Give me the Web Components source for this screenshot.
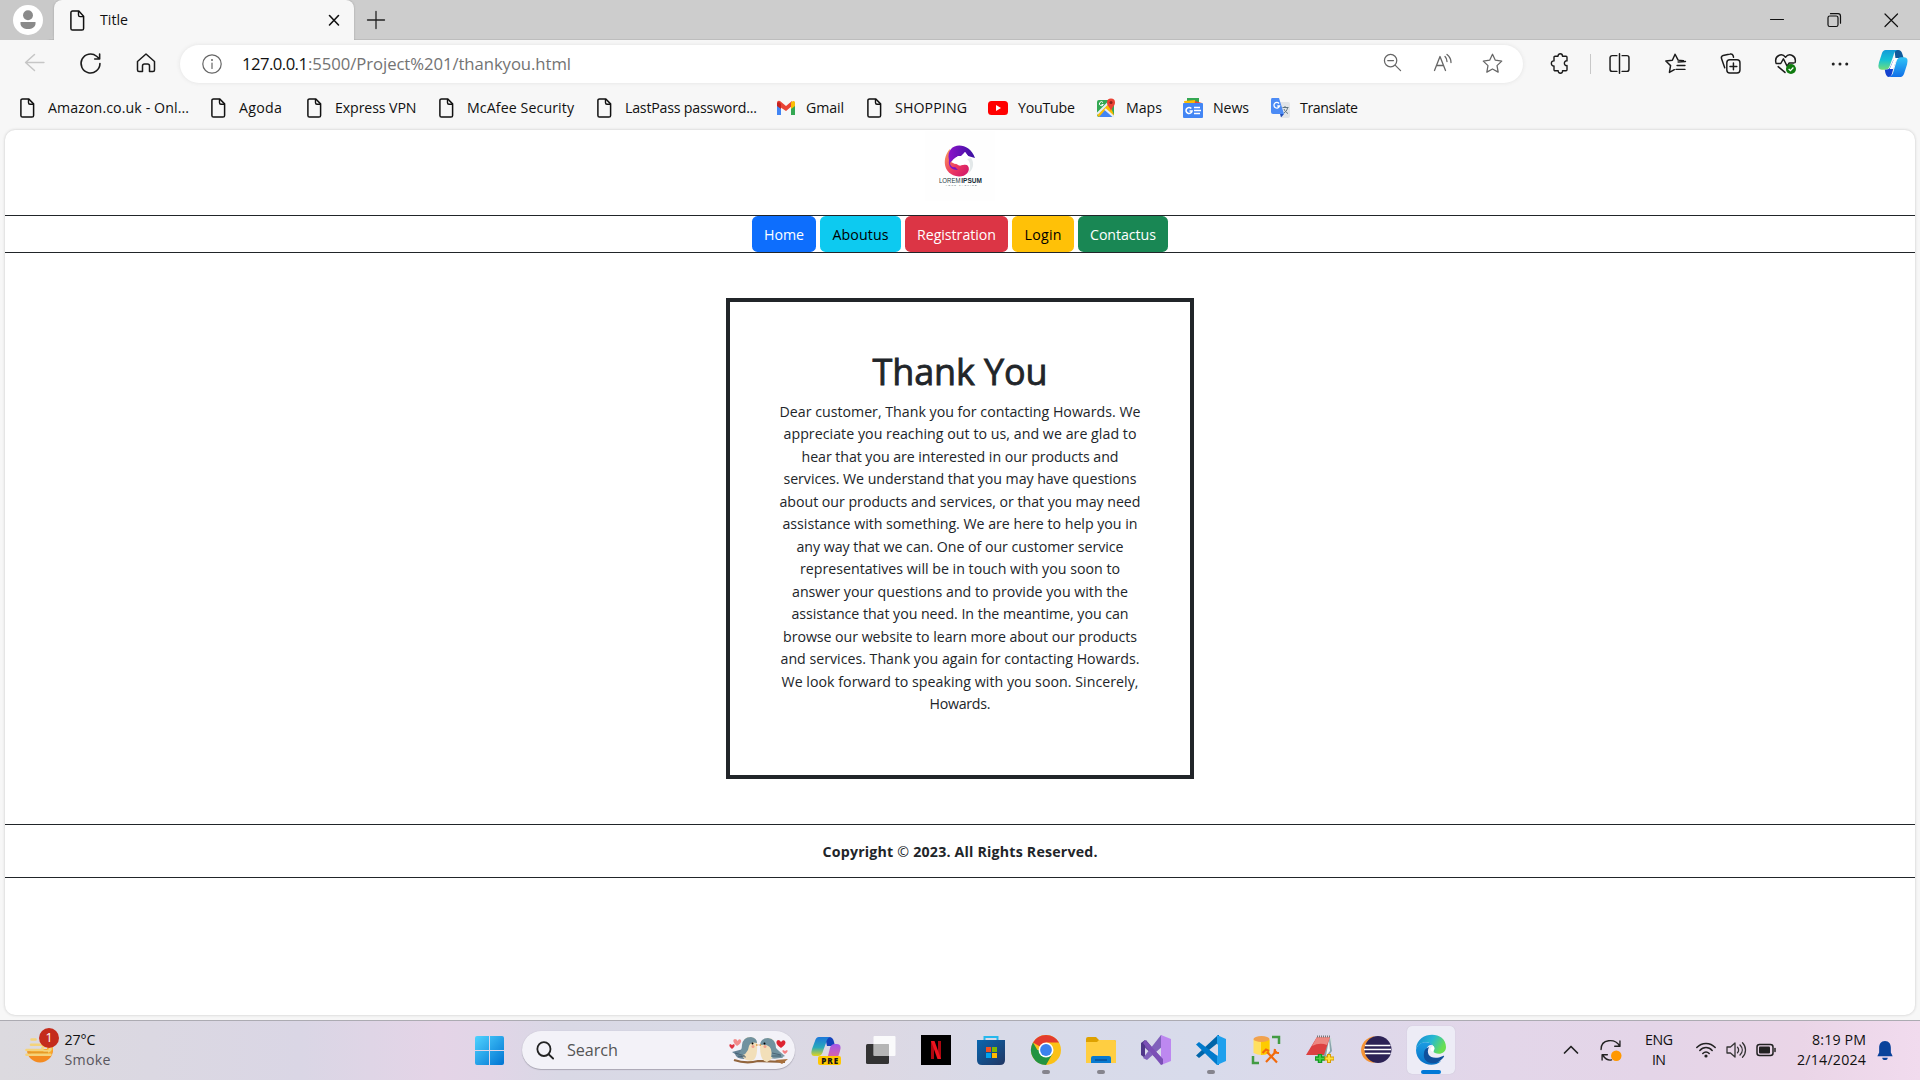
<!DOCTYPE html>
<html lang="en">
<head>
<meta charset="utf-8">
<title>Title</title>
<style>
html,body{margin:0;padding:0;height:100%;overflow:hidden}
body{font-family:"Open Sans","Noto Sans",sans-serif;color:#111;background:#f7f7f7}
</style>
</head>
<body>
<desktop-screen></desktop-screen>
<script>
const doc = '<path d="M4.5 .9h6.3l4.8 5v11.6a1.6 1.6 0 0 1-1.6 1.6H4.5a1.6 1.6 0 0 1-1.6-1.6V2.5A1.6 1.6 0 0 1 4.500 .9z" fill="none" stroke="#111" stroke-width="1.5"/><path d="M10.500 1v3.800a1.500 1.500 0 0 0 1.500 1.500h3.500" fill="none" stroke="#111" stroke-width="1.400"/>';
const L = (s, c = '#1b1b1b', w = 1.4) => `<g fill="none" stroke="${c}" stroke-width="${w}" stroke-linecap="round" stroke-linejoin="round">${s}</g>`;
const star = 'M10 1.200l2.700 5.700 6.100.8-4.500 4.300 1.100 6.200L10 15.200l-5.400 3 1.100-6.200L1.200 7.700l6.100-.8z';
const ICONS = {
doc,
user:'<circle cx="10" cy="10" r="10" fill="#fff"/><circle cx="10" cy="6.800" r="3.300" fill="#8a8a8a"/><path d="M5 11.400h10v.9c0 2.300-2.200 3.700-5 3.700s-5-1.400-5-3.700z" fill="#8a8a8a"/>',
close:L('<path d="M5.500 5.500l9 9.500M14.500 5.500l-9 9.500"/>','#111',1.6),
plus:L('<path d="M10 1.500v17M1.500 10h17"/>','#222',1.300),
min:L('<path d="M3.500 9.500h13"/>','#111',1.100),
restore:L('<rect x="4" y="6" width="10" height="10.500" rx="1.800"/><path d="M6.500 3.700h7.500a2.500 2.500 0 0 1 2.500 2.500v7"/>','#111',1.200),
winclose:L('<path d="M4 4l12.500 12.500M16.500 4L4 16.500"/>','#111',1.200),
back:L('<path d="M19 10H1.500M10 1.500L1.500 10l8.500 8.500"/>','#c6c6c6',1.400),
reload:L('<path d="M19 10a9 9 0 1 1-3.200-6.900l2.700 2.400M18.700 1v4.700H14"/>','#1b1b1b',1.500),
home:L('<path d="M1.500 8.500L10 1l8.500 7.500V17a1.500 1.500 0 0 1-1.500 1.500h-3.500V13a2 2 0 0 0-2-2h-3a2 2 0 0 0-2 2v5.500H3A1.500 1.500 0 0 1 1.500 17z"/>','#1b1b1b',1.500),
info:L('<circle cx="10" cy="10" r="9.200"/><path d="M10 9v5.500"/>','#666',1.200)+'<circle cx="10" cy="6" r="1" fill="#666"/>',
zoomout:L('<circle cx="8" cy="8" r="6.500"/><path d="M13 13l5.500 5.500M5 8h6"/>','#666',1.300),
read:L('<path d="M1.500 17.500L7 3.500l5.500 14M3.500 12.500h7M12 3.500c1.500 1.500 2 3 2 5M14 1.500c2.500 2 4 4.500 4 8"/>','#666',1.300),
star:L(`<path d="${star}"/>`,'#666',1.200),
ext:L('<path d="M5 3h3c0-3 4.500-3 4.500 0H16a1 1 0 0 1 1 1v3.500c-3.500-.5-3.500 5 0 4.500V16a1 1 0 0 1-1 1h-3.500c.5 3-4.500 3-4.300 0H5a1 1 0 0 1-1-1v-3.700C.5 12.500.5 7.300 4 7.500V4a1 1 0 0 1 1-1z"/>'),
split:L('<path d="M10 .8v18.500M7.500 2.500H3A2 2 0 0 0 1 4.500v11a2 2 0 0 0 2 2h4.500M12.500 2.500H17a2 2 0 0 1 2 2v11a2 2 0 0 1-2 2h-4.500"/>'),
favs:L('<path d="M17.500 7.300l-5-.5L9.600 1.200 7 6.900l-6.200.8L5.300 12l-1.100 6.500 4.700-2.600M12.500 8.500l7-.5M11.500 11.800h7.500M10.500 15.600h8.500"/>'),
collections:L('<rect x="6.500" y="6.500" width="12.500" height="12.500" rx="2.800"/><path d="M12.800 9.500v6.500M9.500 12.800H16M4.500 14L1.500 5.500A2.500 2.500 0 0 1 3 2.300L9.500 1a2.500 2.500 0 0 1 3 1.500l.4 1.500"/>'),
heart:L('<path d="M.8 9C-.5 2.500 6.500-.5 10 4c3.500-4.500 10.500-1.500 9.200 5M1 10h4.500L8 5.500l3.500 7 2-3H18M3 13l6.500 5.500"/>')+'<circle cx="15.200" cy="15.200" r="4.800" fill="#107c10"/><path d="M13 15.200l1.700 1.600 2.800-3" fill="none" stroke="#fff" stroke-width="1.200"/>',
dots:'<g fill="#222"><circle cx="2.500" cy="10" r="1.700"/><circle cx="10" cy="10" r="1.700"/><circle cx="17.500" cy="10" r="1.700"/></g>',
copilot:'<defs><linearGradient id="a" x1="0" y1="0" x2="0" y2="1"><stop stop-color="#139bd8"/><stop offset=".5" stop-color="#15c1d5"/><stop offset="1" stop-color="#72dd79"/></linearGradient><linearGradient id="b" x1="0" y1="0" x2="0" y2="1"><stop stop-color="#30c5f7"/><stop offset="1" stop-color="#1270e8"/></linearGradient></defs><path d="M17 0h4q3 0 4 4l1.500 5H18z" fill="#115b9b"/><path d="M8 0h12q-3 1-4 6l-4 12q-1 4-5 4H4Q-1 22 1 14L4 4Q5 0 8 0z" fill="url(#a)"/><path d="M22 30H11q4-1 5-6l3-11q1-5 5-5h3q5 0 3 8l-3 10q-1 4-5 4z" fill="url(#b)"/><path d="M7 22q5 0 6-4l3-7 2 2-3 11q-1 6-4 6-3 0-4-8z" fill="#1443cf"/><path d="M17 9h4q-2 1-3 5l-2 7h-4z" fill="#fff"/>',
gmail:'<path d="M1 4v13h4V8z" fill="#4285f4"/><path d="M15 8v9h4V4z" fill="#34a853"/><path d="M1 5q0-3 3-2l6 5 6-5v5l-6 5-9-6z" fill="#ea4335"/><path d="M15 4.500q4-3 4 .5v3l-4 3z" fill="#fbbc04"/><path d="M1 5v3l4 3V6L3 4z" fill="#c5221f"/>',
youtube:'<rect y="3" width="20" height="14" rx="3.500" fill="#f00"/><path d="M8 7v6l5-3z" fill="#fff"/>',
maps:'<rect x="1" y="2" width="17" height="17" rx="2" fill="#34a853"/><path d="M1 17L13 5l5 12-1 2H3z" fill="#fbbc04"/><path d="M3 19l7-8 7 8z" fill="#4285f4"/><path d="M1 16L14 3M9 11l9 8" stroke="#e9eef5" stroke-width="2"/><path d="M15 13c-1-4-4-5-4-8.500a4 4 0 0 1 8 0C19 8 16 9 15 13z" fill="#ea4335"/><circle cx="15" cy="4.500" r="1.500" fill="#8c2019"/><path d="M7 4.500a2 2 0 1 0 .3 2H5.500" fill="none" stroke="#fff"/>',
news:'<path d="M4 0h12v6H4z" fill="#34a853"/><path d="M1 3l11-1 1 6H2z" fill="#fbbc04"/><path d="M12 3l7 2-1 4h-7z" fill="#ea4335"/><rect y="5" width="20" height="15" rx="1" fill="#4285f4"/><path d="M8.300 10.500a3 3 0 1 0 .7 2.500H6.500M11 9.500h6M11 12.500h7M11 15.500h6" fill="none" stroke="#fff" stroke-width="1.600"/>',
translate:'<path d="M8 4h10q2 0 2 2v12q0 2-2 2h-6z" fill="#e2e5e8"/><path d="M2 0h7l5 16H3q-2 0-2-2V2q0-2 1-2z" fill="#4c8bf5"/><path d="M10 16h4l-3 3.500z" fill="#2350b8"/><path d="M9 5.500a2.800 2.800 0 1 0 .5 2.500H7.300" fill="none" stroke="#fff" stroke-width="1.300"/><path d="M12.500 9.500h6M15 8v1.500M17.500 10c-.5 2.500-2 4-3.500 5M14 11c.7 2 2 3.500 4 4.500" fill="none" stroke="#607580"/>',
weather:'<path d="M2 14a13 12.500 0 0 0 26 0z" fill="#f48b20"/><path d="M28 14a13 13 0 0 0-6-11v10H5l1 6h20z" fill="#f9a92a"/><path d="M6.500 3.500h4M6 8.700h12M1.500 14h16q-1-4 4-4 4 0 4 3-1 3-6 2M1.500 18.700h24" stroke="#f4d37b" stroke-width="2.600" stroke-linecap="round" fill="none"/><path d="M3 16.400h20" stroke="#e49b28" stroke-width="1.500"/>',
start:'<defs><linearGradient id="a" x2="1" y2="1"><stop stop-color="#4fd3ff"/><stop offset="1" stop-color="#0073d2"/></linearGradient></defs><path d="M2 0h12v14H0V2q0-2 2-2zM15 0h12q2 0 2 2v12H15zM0 15h14v14H2q-2 0-2-2zM15 15h14v12q0 2-2 2H15z" fill="url(#a)"/>',
search:L('<circle cx="8.800" cy="8.500" r="7.300"/><path d="M14 14l5 4.500"/>','#222',2),
tcopilot:'<defs><linearGradient id="a" x1="0" y1="0" x2="0" y2="1"><stop stop-color="#1d78da"/><stop offset=".55" stop-color="#28a9ba"/><stop offset="1" stop-color="#e3d41d"/></linearGradient><linearGradient id="b" x2="0" y2="1"><stop stop-color="#a357ea"/><stop offset="1" stop-color="#f66b81"/></linearGradient></defs><path d="M14 2h4q4 0 5 5l1 4h-8z" fill="#1442bb"/><path d="M8 2h11q-3 1-4 6l-3 8q-1 5-5 5H3q-4 0-2-7l3-8q1-4 4-4z" fill="url(#a)"/><path d="M13 28q3-2 4-7l2-8q1-4 5-4h2q5 0 3 7l-3 9q-1 4-5 4h-9z" fill="url(#b)"/><rect x="7" y="21" width="23" height="9" rx="2" fill="#ffc800"/><text x="10.200" y="28.700" font-family="Open Sans" font-size="8" font-weight="800" textLength="17" fill="#151515">PRE</text>',
taskview:'<rect x="0" y="9" width="23" height="20" rx="1.500" fill="#333"/><rect x="7.500" y="1" width="22" height="20" rx="1" fill="#fff" opacity=".86"/><path d="M7.500 9H23v12H7.500z" fill="#888" opacity=".5"/>',
netflix:'<path d="M0 0h30v30H0z"/><path d="M10 6h3v18h-3zM17 6h3v18h-3z" fill="#ad0710"/><path d="M10 6h3.500L20 24h-3.500z" fill="#ed1520"/>',
store:'<defs><linearGradient id="a" x2="1" y2="1"><stop stop-color="#0866af"/><stop offset="1" stop-color="#213663"/></linearGradient></defs><path d="M8.500 8V2h13v6" stroke="#26b8ed" stroke-width="2" fill="none"/><path d="M1 5h28v20q0 5-5 5H6q-5 0-5-5z" fill="url(#a)"/><path d="M10 12h5v5h-5z" fill="#f25022"/><path d="M16 12h5v5h-5z" fill="#7fba00"/><path d="M10 18h5v5h-5z" fill="#00a4ef"/><path d="M16 18h5v5h-5z" fill="#ffb900"/>',
chrome:'<circle cx="15" cy="15" r="15" fill="#fbc116"/><path d="M15 15L2 7.500A15 15 0 0 1 28 7.500H15z" fill="#e33b2e"/><path d="M2 7.500A15 15 0 0 0 15 30l6.500-11.200L15 15H6.400z" fill="#229342"/><circle cx="15" cy="15" r="7.500" fill="#fff"/><circle cx="15" cy="15" r="5.900" fill="#3b82ee"/>',
folder:'<path d="M0 8V4q0-2 2-2h8l3 3h15q2 0 2 2v3H0z" fill="#dea100"/><path d="M0 7h11l2-2h15q2 0 2 2v21H0z" fill="#ffce41"/><path d="M5 28v-5q0-2 2-2h16q2 0 2 2v5z" fill="#087ad0"/><path d="M9 25h12" stroke="#075197" stroke-width="1.500"/>',
vs:'<path d="M0 9l5-4 17 20-2 3z" fill="#694aa1"/><path d="M0 8l4-3v18l-4-3z" fill="#50378a"/><path d="M2 23L20 0l3 3v7L6 25z" fill="#8061bb"/><path d="M20 0l10 4v22l-10 4z" fill="#bd88f0"/><path d="M4 5l18 19v5l-2 1L2 8z" fill="#7b50b6"/>',
vscode:'<path d="M0 20.500l3 2.500L23 7V0h-1z" fill="#0065a9"/><path d="M0 9.500L3 7l20 15v8h-2z" fill="#007acc"/><path d="M21 0l9 4v22l-9 4z" fill="#1fa0ed"/><path d="M22 9v12l-8-6z" fill="#d9dcec"/>',
db:'<path d="M2.500 4v14q8 4 16 0V4z" fill="#ffe061"/><path d="M10 5h8.500v13q-4 2-8.500 2z" fill="#fecb00"/><ellipse cx="10.500" cy="4" rx="8" ry="3" fill="#f1a24e"/><path d="M21 2h7v7M2 21v7h6" fill="none" stroke="#429b43" stroke-width="2.500"/><path d="M15 27l10.500-11M16 17l10 10.500M11.500 18l3.500-3.500 3 1.500M24 14l-.5 3.500 4.500.5" fill="none" stroke="#f26a0c" stroke-width="2.200"/>',
notes:'<path d="M11 3h15l-1 17-7 2z" fill="#d3dde0"/><path d="M24 3l2 13-5 6-6-2z" fill="#88a4aa"/><path d="M23 4l1 12-4 5z" fill="#edf5f7"/><path d="M11 2h13l-6 18H0z" fill="#dc4141"/><path d="M11 2h13l-3 8Q14 7 6 11z" fill="#ed8780"/><path d="M11 1.500h14" stroke="#777" stroke-width="2" stroke-dasharray="1 1"/><path d="M14 19v9M9 23.500h10" stroke="#139b24" stroke-width="4.500"/><path d="M23 19v9M18.500 23.500h9.500" stroke="#d99c00" stroke-width="4"/><path d="M14 20v7M10 23.500h8" stroke="#4bd248" stroke-width="1.700"/><path d="M23 20v7M19.500 23.500h8" stroke="#ffe13c" stroke-width="2"/>',
eclipse:'<path d="M14 1C-5 4-4 27 14 28 3 21 3 8 14 1z" fill="#f59436"/><circle cx="17" cy="14.500" r="13.500" fill="#2c2255"/><path d="M4 10.500h25.500M3 14.500h27M4 18.500h25.500" stroke="#fff" stroke-width="1.700"/>',
edge:'<defs><linearGradient id="a" x2="1" y2=".4"><stop stop-color="#1583d5"/><stop offset=".55" stop-color="#26b9d2"/><stop offset="1" stop-color="#69df51"/></linearGradient><linearGradient id="b" x2="0" y2="1"><stop stop-color="#1b9ce2"/><stop offset="1" stop-color="#0871c7"/></linearGradient></defs><path d="M0 13C2-4.500 30-4.500 30 12c0 6-6 8-11 6-4-2 1-3-1-6C14 5 3 6 0 14z" fill="url(#a)"/><path d="M0 15C1 7 12 5 17 10c-5-1-8 4-6 9s8 9 14 7c-8 8-25 3-25-11z" fill="url(#b)"/><path d="M13 12c-4 8 3 14 14 9 2-1 1 1 0 2-7 9-21 6-19-5 0-3 2-5 5-6z" fill="#10509c"/><path d="M17.500 11c2 3-.5 4 0 6-3-1-5-4 0-6z" fill="#fff"/>',
chev:L('<path d="M3.500 13L10 6.500l6.500 6.500"/>','#222',1.700),
sync:L('<path d="M1 9C1-1 14-2 19 6M19 1v5h-5M2 19v-5h5M3 15c2 3 5 4.500 8 4"/>','#222',1.300)+'<circle cx="15.500" cy="15" r="5" fill="#ff9800"/>',
wifi:L('<path d="M.8 7.500c5-5.500 13.400-5.500 18.400 0M3.800 10.500c3.500-4 8.900-4 12.400 0M6.800 13.500c2-2.100 4.400-2.100 6.400 0"/>','#222',1.500)+'<circle cx="10" cy="16" r="1.600" fill="#222"/>',
vol:L('<path d="M1 7v6h3.500l4.500 4V3L4.500 7zM11.500 7.300c1.500 1.500 1.500 4 0 5.400M14 5c3 3 3 7 0 10M16.500 2.800c4 4 4 10.400 0 14.400"/>','#333',1.300),
bat:L('<rect x="1" y="4.500" width="16" height="11" rx="2.500"/><path d="M19 8.500v3"/>','#222',1.500)+'<rect x="3" y="6.500" width="11" height="7" rx="1" fill="#222"/>',
bell:'<path d="M10 0C5.500 0 3.500 3.500 3.500 7v5L1.500 16h17l-2-4V7c0-3.500-2-7-6.500-7z" fill="#0a429b"/><path d="M7 17.500h6a3 2.500 0 0 1-6 0z" fill="#0a429b"/>',
birds:'<path d="M5 24q12 4 24 1l27 1" stroke="#92653d" stroke-width="2.200" fill="none"/><path d="M46 24l13-1-6 5z" fill="#a8703d"/><path d="M3 16l15-4 4 10q-14 3-16-4z" fill="#648195"/><path d="M56 20L43 9l-6 12q10 4 19-1z" fill="#7d99a5"/><path d="M14 8q1-8 8-7 6 1 6 7 1 16-6 17-9-1-9-7z" fill="#f2dfb9"/><path d="M46 12q1-9-6-10-8 0-9 9 0 14 7 15 8-4 8-14z" fill="#f2dfb9"/><path d="M13 9q1-8 9-8 6 1 6 6-6-2-8 3-1 10-12 10 5-5 5-11zM31 9q1-7 8-7 8 1 8 10l7 10-12-1q3-14-11-12z" fill="#71929f"/><path d="M6 17l10 3M9 20l8 1M43 17l9 2M43 20l9 0" stroke="#3f596b" stroke-width=".8"/><circle cx="23.500" cy="7.500" r="1"/><circle cx="35.500" cy="7.500" r="1"/><path d="M27 8l3 1-3 1zM32 8l-3 1 3 1z" fill="#df9d4c"/><circle cx="24" cy="10.500" r="1.500" fill="#f1a18e"/><circle cx="36" cy="10.500" r="1.500" fill="#f1a18e"/><path d="M8 10C3 6 4 3 6 3q2 0 2.500 2Q10 2 12 4q1 3-4 6z" fill="#f28c8b"/><path d="M3 13q-4-3-2-5l2 1 2-1q2 2-2 5z" fill="#df3441"/><path d="M52 12C46 8 47 5 49 4q2 0 3 2 2-3 4-1 2 3-4 7z" fill="#dd2431"/><path d="M56 18q-4-3-2-4l2 1 2-1q2 1-2 4z" fill="#f57f81"/>',
logo:'<defs><linearGradient id="a" x2="1"><stop stop-color="#8c13c9"/><stop offset="1" stop-color="#3710a0"/></linearGradient><linearGradient id="b" x2="1" y2="1"><stop stop-color="#f9a25c"/><stop offset=".55" stop-color="#ed3961"/><stop offset="1" stop-color="#cc126d"/></linearGradient></defs><rect width="70" height="70" fill="#fefefe"/><path d="M25 18C17 26 17 44 34 45.500c7 0 12-5 9-11-3-3-6 1-9 0-6-3-10-7-9-16.500z" fill="url(#b)"/><path d="M24 29C20 11 44 9 50 27l-7-2-3-4-4 4c-6 0-8 4-11 7 0 3 3 5 5 4l3 3c-6 0-10-3-9-10z" fill="url(#a)"/><path d="M26 31l7-6 5 0 2-4 3 4c5 3 7 11 2 17 1-7-4-10-8-8l-2-3-5 2z" fill="#fff"/><path d="M46 27c4 5 2 12-3 16 3-6 3-12-1-15z" fill="#e3e8e9"/><text x="14" y="52" font-family="Liberation Sans" font-size="6.500" textLength="21.500" lengthAdjust="spacingAndGlyphs" fill="#263a43">LOREM</text><text x="36.300" y="52" font-family="Liberation Sans" font-weight="700" font-size="6.500" textLength="20.500" lengthAdjust="spacingAndGlyphs" fill="#162b36">IPSUM</text><text x="20.500" y="54.700" font-family="Liberation Sans" font-size="2.400" textLength="31" fill="#405159">YOUR TAGLINE</text>'
};
const BOX = {start:'0 0 29 29',birds:'0 0 60 28',logo:'0 0 70 70',copilot:'0 0 31 30',weather:'0 0 30 28'};
for (const n of ['tcopilot','taskview','netflix','store','chrome','folder','vs','vscode','db','notes','eclipse','edge']) BOX[n] = '0 0 30 30';

function define(name, css, html, ready) {
  customElements.define(name, class extends HTMLElement {
    connectedCallback() {
      if (this.shadowRoot) return;
      const root = this.attachShadow({mode: 'open'});
      root.innerHTML = `<style>*{box-sizing:border-box}${css}</style>` + (typeof html === 'function' ? html(this) : html);
      if (ready) ready(this, root);
    }
  });
}

define('ui-icon', ':host{display:block;flex:none}svg{display:block;width:100%;height:100%;overflow:visible}',
  el => `<svg viewBox="${BOX[el.getAttribute('name')] || '0 0 20 20'}" preserveAspectRatio="none">${ICONS[el.getAttribute('name')]}</svg>`,
  el => { const [w, h] = el.getAttribute('size').split(' '); el.style.width = w + 'px'; el.style.height = (h || w) + 'px'; });

/* Text run tracked so that it spans exactly the width given in its "w" attribute. */
define('fit-text', ':host{display:block;flex:none;white-space:nowrap}span{display:inline-block}', '<span><slot></slot></span>',
  (el, root) => {
    const w = +el.getAttribute('w'), s = root.querySelector('span');
    el.style.width = w + 'px';
    const n = el.textContent.length;
    s.style.letterSpacing = ((w - s.getBoundingClientRect().width) / Math.max(1, n - 1)) + 'px';
  });

define('tab-strip', `:host{display:flex;height:40px;background:#cdcdcd;align-items:center;box-shadow:inset 0 -1px #bdbdbd}
  .user{width:54px;padding-left:13px;height:40px;display:flex;align-items:center;border-radius:0 0 8px 0;background:#c9c9c9}
  .tab{width:300px;height:40px;background:#f7f7f7;border-radius:8px 8px 0 0;display:flex;align-items:center;padding:0 10px 0 14px;box-shadow:0 0 2px #999;clip-path:inset(0 -3px 0 -3px)}
  fit-text{font-size:14.2px;margin-left:12px;padding-bottom:2px}.x{margin-left:auto}.plus{margin-left:12px;margin-bottom:1px}
  .win{margin-left:auto;display:flex;gap:37px;padding:0 19px 1px 0}`,
  `<div class="user"><ui-icon name="user" size="30"></ui-icon></div>
  <div class="tab"><ui-icon name="doc" size="20 21"></ui-icon><fit-text w="28">Title</fit-text><ui-icon class="x" name="close" size="20"></ui-icon></div>
  <ui-icon class="plus" name="plus" size="20"></ui-icon>
  <div class="win"><ui-icon name="min" size="20"></ui-icon><ui-icon name="restore" size="20"></ui-icon><ui-icon name="winclose" size="20"></ui-icon></div>`);

define('nav-bar', `:host{display:flex;height:48px;align-items:center;padding:0 12px 1px 24px;background:#f7f7f7}
  .nav{display:flex;gap:34px;width:156px}.nav ui-icon+ui-icon{margin-left:1px}
  .addr{width:1343px;height:38px;border-radius:19px;background:#fff;display:flex;align-items:center;padding:0 20px 0 22px;box-shadow:0 0 4px #e2e2e2}
  .url{display:flex;margin-left:20px;font-size:16.700px;line-height:24px;color:#737373}.host{color:#111}
  .act{margin-left:auto;display:flex;gap:30px}
  .tools{display:flex;align-items:center;margin-left:27px}.sep{width:1px;height:20px;background:#c8c8c8}`,
  `<div class="nav"><ui-icon name="back" size="21 19"></ui-icon><ui-icon name="reload" size="21"></ui-icon><ui-icon name="home" size="20"></ui-icon></div>
  <div class="addr"><ui-icon name="info" size="20"></ui-icon><div class="url"><fit-text class="host" w="66">127.0.0.1</fit-text><fit-text w="263">:5500/Project%201/thankyou.html</fit-text></div>
  <div class="act"><ui-icon name="zoomout" size="19"></ui-icon><ui-icon name="read" size="20" style="margin-left:1px"></ui-icon><ui-icon name="star" size="21" style="margin-left:-1px"></ui-icon></div></div>
  <div class="tools"><ui-icon name="ext" size="20 21"></ui-icon><div class="sep" style="margin:0 18px 0 20px"></div>
  <ui-icon name="split" size="21"></ui-icon><ui-icon name="favs" size="21" style="margin-left:35px"></ui-icon><ui-icon name="collections" size="21" style="margin-left:34px"></ui-icon><ui-icon name="heart" size="21" style="margin-left:34px"></ui-icon><ui-icon name="dots" size="18" style="margin-left:35px"></ui-icon><ui-icon name="copilot" size="30 27" style="margin-left:29px"></ui-icon></div>`);

define('book-mark', ':host{display:flex;align-items:center;flex:none;gap:10px;font-size:14.200px;line-height:20px}',
  el => `<ui-icon name="${el.getAttribute('icon')}" size="20"></ui-icon><fit-text w="${el.getAttribute('w')}">${el.textContent}</fit-text>`,
  el => el.style.width = el.getAttribute('span') + 'px');
define('bookmark-bar', ':host{display:flex;height:42px;padding:0 0 2px 18px;align-items:center;background:#f7f7f7}',
  [['doc','Amazon.co.uk - Onl...',141,191],['doc','Agoda',43,96],['doc','Express VPN',81.500,132],['doc','McAfee Security',107,158],['doc','LastPass password...',132,181],['gmail','Gmail',38,89],['doc','SHOPPING',72,123],['youtube','YouTube',57,108],['maps','Maps',36,87],['news','News',36,87],['translate','Translate',58,90]]
  .map(b => `<book-mark icon="${b[0]}" w="${b[2]}" span="${b[3]}">${b[1]}</book-mark>`).join(''));

define('nav-button', ':host{display:flex;box-sizing:border-box;align-items:center;justify-content:center;height:36px;border-radius:5.600px;font-size:14.200px;line-height:22px;padding-top:2px}',
  '<slot></slot>', el => { el.style.background = el.getAttribute('bg'); el.style.color = el.getAttribute('fg'); el.style.width = el.getAttribute('width') + 'px'; });

define('thank-card', `:host{display:flex;box-sizing:border-box;flex-direction:column;align-items:center;width:468px;height:481px;border:4px solid #212529;color:#212529;padding-top:47px}
  h1{margin:0 0 6.500px;font-size:36px;font-weight:500;line-height:45px;-webkit-text-stroke:.8px #212529}.p{display:flex;flex-direction:column;align-items:center;font-size:14.200px;line-height:22.500px}`,
  '<h1><fit-text w="175">Thank You</fit-text></h1><div class="p">' + [
  [361,'Dear customer, Thank you for contacting Howards. We'],[353,'appreciate you reaching out to us, and we are glad to'],[317,'hear that you are interested in our products and'],[353,'services. We understand that you may have questions'],[361,'about our products and services, or that you may need'],[355,'assistance with something. We are here to help you in'],[327,'any way that we can. One of our customer service'],[320,'representatives will be in touch with you soon to'],[336,'answer your questions and to provide you with the'],[337,'assistance that you need. In the meantime, you can'],[354,'browse our website to learn more about our products'],[359,'and services. Thank you again for contacting Howards.'],[357,'We look forward to speaking with you soon. Sincerely,'],[61,'Howards.']]
  .map(l => `<fit-text w="${l[0]}">${l[1]}</fit-text>`).join('') + '</div>');

define('web-page', `:host{display:flex;flex-direction:column;align-items:center;margin:0 5px;height:885px;background:#fff;border-radius:10px;box-shadow:0 0 3px #c4c4c4}
  .logo{height:85px;padding-top:1px}nav{display:flex;width:100%;justify-content:center;gap:4px;height:38px;border:solid #212529;border-width:1px 0}
  main{height:571px;padding-top:45px}footer{width:100%;height:54px;border:solid #212529;border-width:1px 0;display:flex;align-items:center;justify-content:center;font-size:14.200px;font-weight:700;color:#212529}`,
  `<div class="logo"><ui-icon name="logo" size="70"></ui-icon></div>
  <nav><nav-button bg="#0d6efd" fg="#fff" width="64"><fit-text w="40">Home</fit-text></nav-button><nav-button bg="#0dcaf0" fg="#000" width="81"><fit-text w="56">Aboutus</fit-text></nav-button><nav-button bg="#dc3545" fg="#fff" width="103"><fit-text w="79">Registration</fit-text></nav-button><nav-button bg="#ffc107" fg="#000" width="62"><fit-text w="37">Login</fit-text></nav-button><nav-button bg="#198754" fg="#fff" width="90"><fit-text w="66">Contactus</fit-text></nav-button></nav>
  <main><thank-card></thank-card></main>
  <footer><fit-text w="275">Copyright <span style="font-weight:400">©</span> 2023. All Rights Reserved.</fit-text></footer>`);

define('task-app', `:host{display:flex;box-sizing:border-box;flex-direction:column;align-items:center;width:48px;height:48px;padding-top:9px;border-radius:5px;flex:none}
  :host([active]){background:#edecf6;box-shadow:0 0 1px #b9b8c5}i{display:none;width:8px;height:4px;border-radius:2px;background:#85848d;margin-top:5px}
  :host([running]) i,:host([active]) i{display:block}:host([active]) i{width:20px;background:#0078d7}`,
  el => `<ui-icon name="${el.getAttribute('icon')}" size="30"></ui-icon><i></i>`);

define('task-bar', `:host{display:flex;box-sizing:border-box;height:60px;border-top:1px solid #acabb2;align-items:center;padding-bottom:1px;background:linear-gradient(90deg,#dcdadf 0,#dad6e5 300px,#e4d4e7 440px,#e1d5e7 490px,#d9d8e5 560px,#d9dae6 700px,#ddd8e3 860px,#d8dae8 1000px,#d8dbeb 1200px,#e3d6e9 1500px,#e4d5e8 1650px,#ead5e7 1800px,#f1dbee 1920px);font-size:14.200px;line-height:20px}
  .weather{position:relative;display:flex;width:475px;padding-left:25px;align-items:center}.badge{position:absolute;left:39px;top:-2px;width:20px;height:20px;border-radius:50%;background:#c42b1c;color:#fff;display:grid;place-items:center;font-size:12.500px}
  .wt{margin-left:9.500px}.gray{color:#58565e}
  .search{margin-left:18px;width:273px;height:38px;border-radius:19px;background:#f3f2f8;box-shadow:0 1px 1px #aaa7b4,0 0 1px #bbb8c6;display:flex;align-items:center;padding:0 6px 0 14px;font-size:16.200px;color:#555}
  .apps{display:flex;gap:7px;margin-left:7px}.tray{margin-left:auto;display:flex;align-items:center;padding-right:26px}
  .col{display:flex;flex-direction:column;align-items:center}.end{align-items:flex-end}`,
  `<div class="weather"><ui-icon name="weather" size="30 28"></ui-icon><div class="wt"><fit-text w="31">27°C</fit-text><fit-text class="gray" w="46">Smoke</fit-text></div><div class="badge">1</div></div>
  <ui-icon name="start" size="29"></ui-icon>
  <div class="search"><ui-icon name="search" size="18 19"></ui-icon><fit-text w="51" style="margin-left:13px">Search</fit-text><ui-icon name="birds" size="60 28" style="margin-left:auto"></ui-icon></div>
  <div class="apps">` + [['tcopilot'],['taskview'],['netflix'],['store'],['chrome','running'],['folder','running'],['vs'],['vscode','running'],['db'],['notes'],['eclipse'],['edge','active']].map(a => `<task-app icon="${a[0]}" ${a[1] || ''}></task-app>`).join('') + `</div>
  <div class="tray"><ui-icon name="chev" size="20"></ui-icon><ui-icon name="sync" size="21" style="margin-left:19px"></ui-icon>
  <div class="col" style="margin-left:24px"><fit-text w="28">ENG</fit-text><fit-text w="14">IN</fit-text></div>
  <ui-icon name="wifi" size="20" style="margin-left:23px"></ui-icon><ui-icon name="vol" size="20" style="margin-left:10px"></ui-icon><ui-icon name="bat" size="20" style="margin-left:10px"></ui-icon>
  <div class="col end" style="margin-left:21px"><fit-text w="54">8:19 PM</fit-text><fit-text w="69">2/14/2024</fit-text></div><ui-icon name="bell" size="18 19" style="margin-left:10px"></ui-icon></div>`);

define('desktop-screen', ':host{display:flex;flex-direction:column;width:1920px;height:1080px;background:#f7f7f7;overflow:hidden}task-bar{margin-top:auto}',
  '<tab-strip></tab-strip><nav-bar></nav-bar><bookmark-bar></bookmark-bar><web-page></web-page><task-bar></task-bar>');
</script>
</body>
</html>
